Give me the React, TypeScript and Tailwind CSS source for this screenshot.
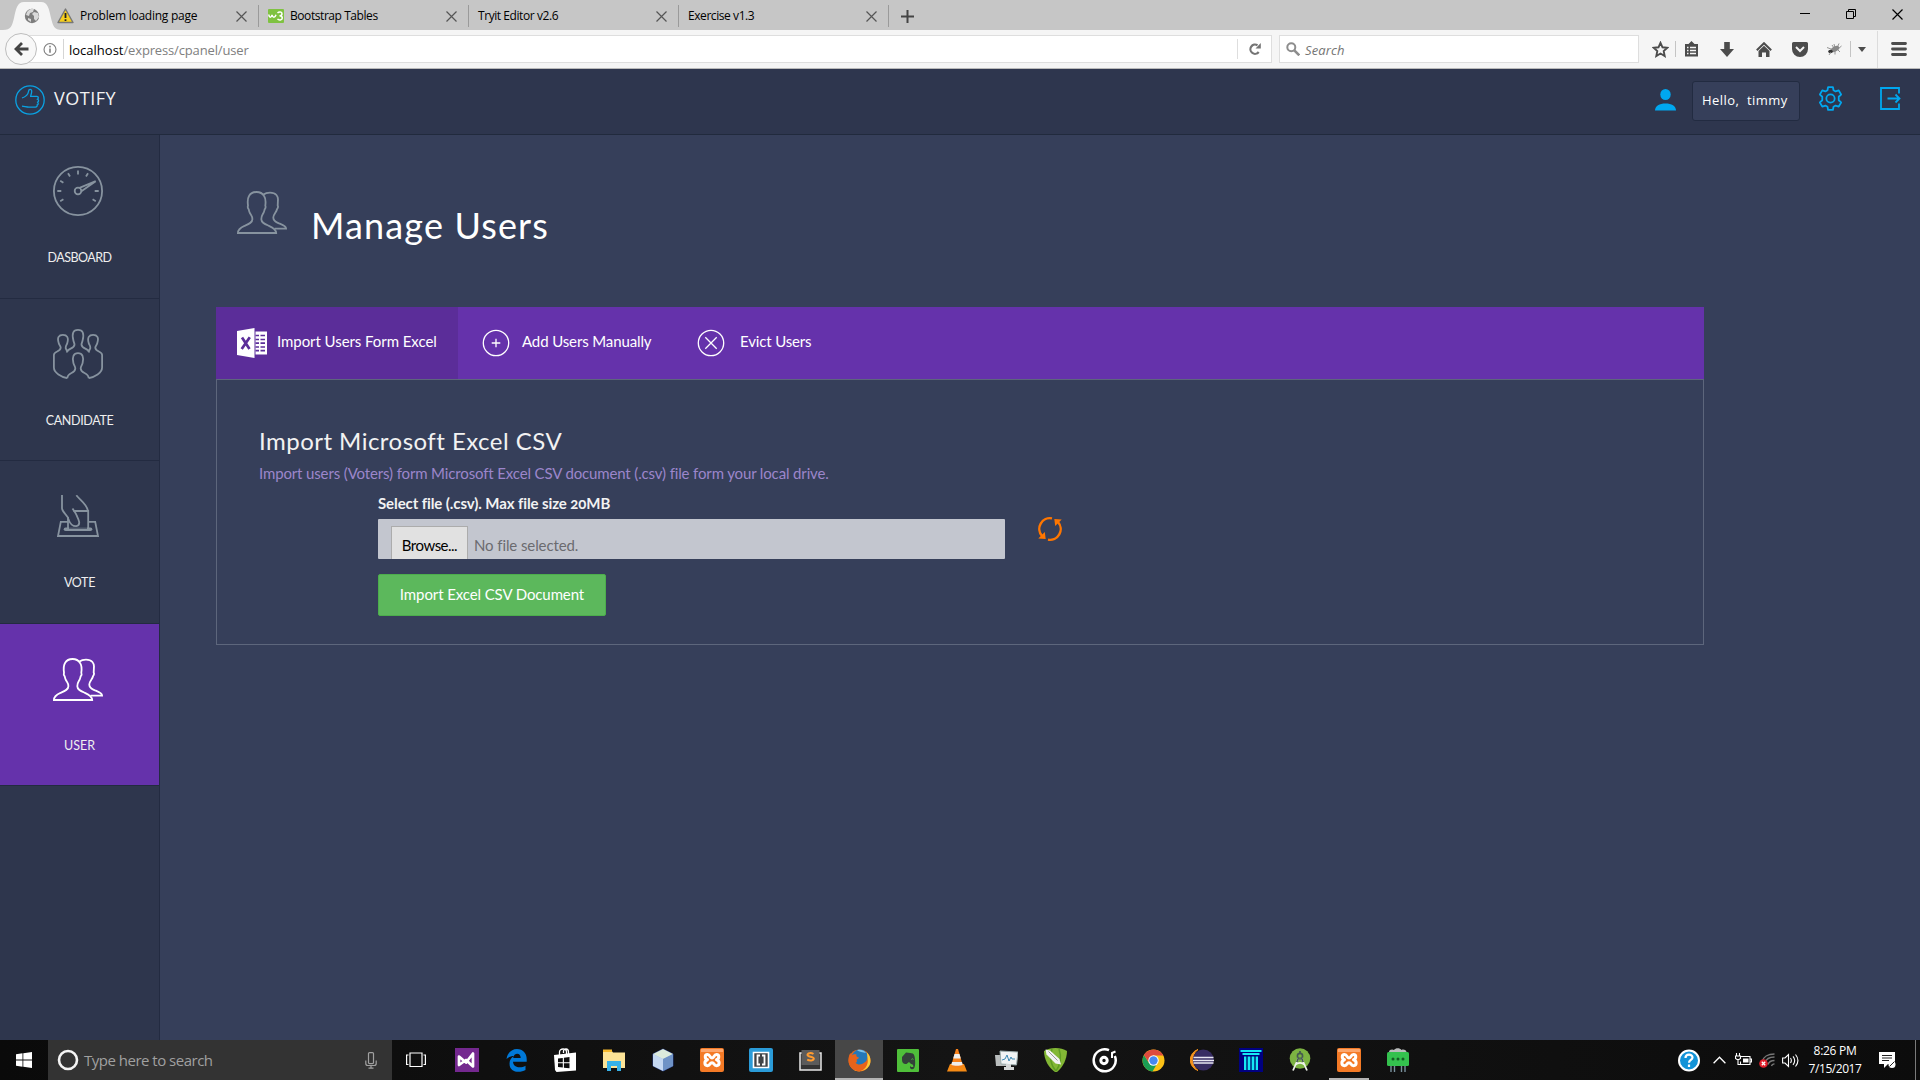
import React from "react";

const UI = "font-['Open_Sans','Noto_Sans',sans-serif]";
const BODY = "font-['Lato','Open_Sans',sans-serif]";

function Cross({ className = "size-[11px]" }: { className?: string }) {
  return (
    <svg className={className} viewBox="0 0 11 11" fill="none" stroke="currentColor" strokeWidth="1.2">
      <path d="M.5 .5 10.5 10.5M10.5 .5 .5 10.5" />
    </svg>
  );
}

function UsersIcon({ className }: { className: string }) {
  return (
    <svg className={className} width="50" height="43" viewBox="0 0 50 43" fill="none" stroke="currentColor" strokeWidth="1.8">
      <path d="M.9 42C.9 38.500 3.500 36.500 7.500 34.800c4.200-1.700 7.900-3 7.900-6.500 0-3.500-1-3.500-2.400-6-1-1.700-1-2.800-1.300-4-1.200-1.200-1.100-2.500-.7-3.700-.5-3.700-.5-7.100 1-9.600C13.500 2.300 16.500 1 19.600 1s5.800 1.200 7.500 4c1.700 2.500 1.700 6 1.200 9.600.5 1.200.500 2.500-.6 3.700-.4 1.200-.4 2.300-1.400 4-1.500 2.500-2 2.500-2 6 0 3.500 3.600 4.800 7.600 6.500 4 1.700 7.200 3.700 7.300 7.200z" />
      <path d="M26.500 3.500C28.500 2 31 1.700 33 1.700c6 0 8.500 3.400 7.900 8.300l-.2 4.500c.5 1 .3 2.500-.6 3.500-.7 3.500-3.800 5-3.800 8.500 0 4 2.700 4.500 5.700 5.900 3.500 1.500 7 2.200 7.100 5.300H37.500" />
    </svg>
  );
}

function GaugeIcon() {
  return (
    <svg width="50" height="50" viewBox="0 0 50 50" fill="none" stroke="currentColor" strokeWidth="1.8">
      <circle cx="25" cy="25" r="24.100" />
      <circle cx="25" cy="25" r="3.300" />
      <path d="M26.500 21.800 42.700 15.200 28.400 25.300" />
      <path d="M25 4.500v4M15 7.200l2 3.200M35 7.200l-2 3.200M7.200 14.800l3.200 1.900M4.300 25h4M7.200 35.200l3.200-1.900M45.700 25h-4M42.800 35.200l-3.200-1.900" />
    </svg>
  );
}

function GroupIcon() {
  return (
    <svg width="50" height="50" viewBox="0 0 50 50" fill="none" stroke="currentColor" strokeWidth="1.800">
      <path d="M14.300 49.200C8.500 47.800 .9 44 .9 38.500V26c0-4 6.800-3 6.800-7.500 0-1.500-1.600-2.500-2-4.500-1.800-5.500.1-8.200 4.200-8.200s6 2.700 4.400 8.200c-.4 2-2.100 3-1.500 5.500.3 1.200 1.200 2.200 2.400 3" />
      <path d="M13.800 23.500c.5-4.500 7.700-3.200 7.700-8 0-1.200-.8-2.200-1.200-4.500C18.800 4.500 20 .9 25 .9s6.200 3.600 4.700 10.100c-.4 2.300-1.200 3.300-1.200 4.500 0 4.800 7.200 3.500 7.700 8" />
      <path d="M35.700 49.200C41.500 47.800 49.100 44 49.100 38.500V26c0-4-6.800-3-6.800-7.500 0-1.500 1.600-2.500 2-4.500 1.800-5.500-.1-8.200-4.200-8.200s-6 2.700-4.400 8.200c.4 2 2.100 3 1.500 5.500-.3 1.200-1.200 2.200-2.400 3" />
      <path d="M14.300 49.200c0-6.200 8-4.200 8-9.700 0-2-1.300-3-1.900-5.500-1.500-6 .1-9.800 4.600-9.800s6.100 3.800 4.600 9.800c-.6 2.500-1.900 3.500-1.900 5.500 0 5.500 8 3.500 8 9.700" />
    </svg>
  );
}

function VoteIcon() {
  return (
    <svg width="42" height="42" viewBox="0 0 42 42" fill="none" stroke="currentColor" strokeWidth="1.800">
      <path d="M5 0v13c0 5 6 6.500 6.700 12 1.300 3.500 4.300 6.500 7.600 6.200 5.200-.9 2.200-7 .4-10.700-1.200-3-2.700-4.700-4.200-7" />
      <path d="M19.300.3C23 5 30.500 9.500 30.800 16M16.500 16h14.700v18.500H11V22" />
      <path d="M11 26.800H3.800L1 41h40l-2.800-14.200h-7" />
      <path d="M8.500 34.300h25" strokeWidth="3.600" strokeLinecap="round" />
      <path d="M12 33h18" stroke="#2e364d" strokeWidth="1.200" />
    </svg>
  );
}

function Tab({ label, icon }: { label: string; icon?: React.ReactNode }) {
  return (
    <div className="flex h-full w-[210px] items-center pt-[2px]">
      {icon}
      <span className="tracking-[-0.43px] text-black">{label}</span>
      <span className="mr-[11px] ml-auto text-[#555]"><Cross /></span>
      <i className="h-[22px] w-px bg-[#9a9a9a]" />
    </div>
  );
}

function BrowserChrome() {
  return (
    <header className={`${UI} h-[69px] w-full border-b border-[#b9b9b9] bg-[#f5f5f5] text-[12px] leading-[16px]`}>
      <div className="flex h-[30px] bg-[#c6c6c6]">
        <div className="relative h-[30px] w-[57px]">
          <svg width="62" height="30" viewBox="0 0 62 30">
            <path d="M3 30c8 0 9-4 11-12 2-9 3-16 10-16h17c7 0 8 7 10 16 2 8 3 12 11 12z" fill="#f5f5f5" />
            <circle cx="32" cy="16" r="7.200" fill="#7d7d7d" />
            <path d="M27 12c2-3 5-4 7-3l-1 3-3 1-1 3-3-1zM34 12l4 1 1 4-3 4-2-2v-3l-2-2zM28 18l3 1v3l-3-2z" fill="#d9d9d9" />
          </svg>
        </div>
        <div className="flex h-full w-[202px] items-center pt-[2px]">
          <svg className="mr-[6px]" width="17" height="16" viewBox="0 0 17 16">
            <path d="M8.500 1 16 14.500H1z" fill="#f7cf1d" stroke="#777" strokeWidth="1.400" strokeLinejoin="round" />
            <path d="M8.500 5v5M8.500 11.300v1.800" stroke="#222" strokeWidth="1.800" />
          </svg>
          <span className="tracking-[-0.25px] text-black">Problem loading page</span>
          <span className="mr-[11px] ml-auto text-[#555]"><Cross /></span>
          <i className="h-[22px] w-px bg-[#9a9a9a]" />
        </div>
        <Tab
          label="Bootstrap Tables"
          icon={
            <svg className="mr-[6px] ml-[9px]" width="16" height="14" viewBox="0 0 16 14">
              <rect width="16" height="14" rx="1" fill="#7fc241" />
              <path d="M.8 5.500c.5 3.500 2.500 3.500 3.200.3.700 3.200 3 3.200 4 0M9.500 4c1.500-1.500 4.500-1.300 4.500.8 0 1.700-1.500 2-2.500 2 1.500 0 2.800.5 2.800 2.300 0 2-3.500 2.500-4.800.800" fill="none" stroke="#fff" strokeWidth="1.500" />
            </svg>
          }
        />
        <Tab label="Tryit Editor v2.6" icon={<i className="w-[9px]" />} />
        <Tab label="Exercise v1.3" icon={<i className="w-[9px]" />} />
        <div className="flex w-[36px] items-center justify-center pt-[2px] text-[#444]">
          <svg width="13" height="13" viewBox="0 0 13 13" stroke="currentColor" strokeWidth="2"><path d="M6.500 0v13M0 6.500h13" /></svg>
        </div>
        <div className="mr-[17px] ml-auto flex items-center gap-[36px] pb-[2px] text-black">
          <svg width="10" height="10" viewBox="0 0 10 10" stroke="currentColor"><path d="M0 4.500h10" /></svg>
          <svg width="10" height="10" viewBox="0 0 10 10" fill="none" stroke="currentColor"><path d="M.5 2.500h7v7h-7zM2.500 2.500v-2h7v7h-2" /></svg>
          <Cross className="size-[11px]" />
        </div>
      </div>
      <div className="flex h-[38px] items-center">
        <div className="flex h-[28px] w-[1272px] shrink-0 items-center">
          <div className="relative z-10 ml-[5px] flex size-[32px] shrink-0 items-center justify-center rounded-full border border-[#bdbdbd] bg-[#f8f8f8] text-[#444]">
            <svg width="15" height="14" viewBox="0 0 15 14" fill="none" stroke="currentColor" strokeWidth="2.800"><path d="M8 1 2 7l6 6M2.500 7H14.500" /></svg>
          </div>
          <div className="-ml-[13px] flex h-[28px] flex-1 items-center border border-[#dedede] bg-white pl-[18px]">
            <svg width="14" height="15" viewBox="0 0 15 15" fill="none" stroke="#808080" strokeWidth="1.200">
              <circle cx="7.500" cy="7.500" r="6.400" /><path d="M7.500 6.500V11M7.500 3.600v1.800" strokeWidth="1.700" />
            </svg>
            <i className="ml-[6px] h-[20px] w-px bg-[#d5d5d5]" />
            <span className="ml-[5px] pt-[2px] text-[13px] text-black">localhost</span>
            <span className="pt-[2px] text-[13px] tracking-[-0.15px] text-[#808080]">/express/cpanel/user</span>
            <div className="ml-auto flex h-[20px] w-[34px] items-center justify-center border-l border-[#dedede]">
              <svg width="12" height="12" viewBox="0 0 12 12" fill="none" stroke="#757575" strokeWidth="2.200">
                <path d="M9.700 9A4.600 4.600 0 1 1 8.500 2.300" /><path d="M6.500 5.500h5.300V0z" fill="#757575" stroke="none" />
              </svg>
            </div>
          </div>
        </div>
        <div className="ml-[7px] flex h-[28px] w-[360px] shrink-0 items-center border border-[#dedede] bg-white pl-[6px]">
          <svg width="14" height="14" viewBox="0 0 14 14" fill="none" stroke="#8d8d8d" strokeWidth="2"><circle cx="5.300" cy="5.300" r="4" /><path d="m8.300 8.300 5 5" strokeWidth="2.600" /></svg>
          <span className="ml-[5px] pt-[2px] text-[13px] tracking-[0.1px] text-[#757575] italic">Search</span>
        </div>
        <div className="ml-[6px] flex h-full items-center text-[#4c4c4c]">
          <div className="flex w-[30px] justify-center">
            <svg width="17" height="17" viewBox="0 0 17 17" fill="none" stroke="currentColor" strokeWidth="1.900"><path d="m8.500 1.800 2 4.500 4.800.5-3.600 3.300 1 4.900-4.200-2.500L4.300 15l1-4.900L1.700 6.800l4.800-.5z" /></svg>
          </div>
          <i className="h-[16px] w-px bg-[#c4c4c4]" />
          <div className="flex w-[31px] justify-center">
            <svg width="15" height="16" viewBox="0 0 15 16"><path d="M1 3h3.500L7.500 0l3 3H14v12.500H1z" fill="currentColor" /><path d="M3 6.500h1.500M6 6.500h6M3 9.500h1.500M6 9.500h6M3 12.500h1.500M6 12.500h6" stroke="#f5f5f5" strokeWidth="1.500" /></svg>
          </div>
          <div className="flex w-[39px] justify-center">
            <svg width="14" height="15" viewBox="0 0 14 15" fill="currentColor"><path d="M4.200 0h5.600v7H14l-7 8-7-8h4.200z" /></svg>
          </div>
          <div className="flex w-[36px] justify-center">
            <svg width="16" height="15" viewBox="0 0 16 15"><path d="m.8 8.200 7.200-7 7.200 7" fill="none" stroke="currentColor" strokeWidth="2" /><path d="m2.500 9 5.500-5.300L13.500 9v6H10v-4.500H6V15H2.500z" fill="currentColor" /></svg>
          </div>
          <div className="flex w-[36px] justify-center">
            <svg width="16" height="15" viewBox="0 0 16 15"><path d="M1.500 0h13A1.500 1.500 0 0 1 16 1.500V7A8 8 0 0 1 0 7V1.500A1.500 1.500 0 0 1 1.500 0z" fill="currentColor" /><path d="m4 5 4 4 4-4" fill="none" stroke="#f5f5f5" strokeWidth="2" /></svg>
          </div>
          <div className="flex w-[32px] justify-center">
            <svg width="16" height="13" viewBox="0 0 16 13"><ellipse cx="9" cy="6" rx="4.500" ry="2.600" transform="rotate(-25 9 6)" fill="#888" /><ellipse cx="4.500" cy="8.500" rx="2.300" ry="1.800" fill="#333" /><path d="M1 4.500 5 6M3 12l2-3M9 11.500V7M8 1l1 4M13 .5 11 5M15.500 3 12 6M14 9l-3-3M6 2l2 3" stroke="#888" strokeWidth=".9" /></svg>
          </div>
          <i className="h-[16px] w-px bg-[#c4c4c4]" />
          <div className="flex w-[26px] justify-center pr-[5px]">
            <svg width="8" height="5" viewBox="0 0 8 5" fill="currentColor"><path d="M0 0h8L4 5z" /></svg>
          </div>
          <i className="h-[37px] w-px bg-[#dcdcdc]" />
          <div className="flex w-[42px] justify-center">
            <svg width="16" height="14" viewBox="0 0 16 14" stroke="currentColor" strokeWidth="2.800" strokeLinecap="round"><path d="M1.500 1.500h13M1.500 7h13M1.500 12.500h13" /></svg>
          </div>
        </div>
      </div>
    </header>
  );
}

function AppHeader() {
  return (
    <div className="flex h-[66px] items-start border-b border-[#212a3d] bg-[#2e364e]">
      <svg className="mt-[16px] ml-[15px]" width="30" height="30" viewBox="0 0 30 30" fill="none" stroke="#0aa2e3" strokeWidth="1.300">
        <circle cx="15" cy="15" r="14.200" />
        <path d="M7 13c3-1 6-3 6.500-6.500.1-2.500 3-3 3.200-.500.1 2-.7 3.500-1 5.300h6.200c1.800.2 1.700 2.400.7 2.900 1.400.7 1.200 2.500.1 3 .9 1 .5 2.300-.5 2.700.3 1.200-.5 2.200-1.700 2.300H14c-2.500 0-4.500-.8-7-1" />
      </svg>
      <span className={`${UI} mt-[17px] ml-[9px] text-[18px] leading-[24px] tracking-[0.5px] text-[#f2f2f2]`}>VOTIFY</span>
      <svg className="mt-[20px] ml-auto" width="21" height="22" viewBox="0 0 21 22" fill="#00a8f0"><ellipse cx="10.500" cy="5.500" rx="5.200" ry="5.500" /><path d="M0 21.500c0-4.500 4.500-7 10.500-7S21 17 21 21.500z" /></svg>
      <div className={`${UI} mt-[12px] ml-[16px] flex h-[40px] w-[108px] items-center rounded-[3px] border border-[#222b41] bg-[#363f5a] pb-[2px] pl-[9px] text-[13px] leading-[18px] whitespace-pre text-white`}>
        <span className="tracking-[0.45px]">Hello,  timmy</span>
      </div>
      <svg className="mt-[17px] ml-[18px]" width="25" height="25" viewBox="0 0 24 24" fill="none" stroke="#00a8f0" strokeWidth="1.700">
        <circle cx="12" cy="12" r="4" />
        <path d="M9.700 1h4.600l.6 3.100 2 1.100 3-1 2.300 4-2.300 2.100v3.400l2.300 2.100-2.300 4-3-1-2 1.100-.6 3.100H9.700l-.6-3.100-2-1.100-3 1-2.300-4 2.300-2.100v-3.400L1.800 8.200l2.300-4 3 1 2-1.100z" strokeLinejoin="round" />
      </svg>
      <svg className="mt-[18px] mr-[19px] ml-[37px]" width="21" height="23" viewBox="0 0 21 23" fill="none" stroke="#00a8f0" strokeWidth="1.800"><path d="M19 6.500V1H1v21h18v-5.500M7.500 11.500h12M15.500 7.500l4 4-4 4" /></svg>
    </div>
  );
}

const navItems = [
  { label: "DASBOARD", size: "h-[164px]", box: "h-[114px] pt-[31px]", tracking: "tracking-[-0.5px]", icon: <GaugeIcon />, active: false },
  { label: "CANDIDATE", size: "h-[162px]", box: "h-[113px] pt-[30px]", tracking: "tracking-[-0.35px]", icon: <GroupIcon />, active: false },
  { label: "VOTE", size: "h-[163px]", box: "h-[113px] pt-[34px]", tracking: "tracking-[-0.3px]", icon: <VoteIcon />, active: false },
  { label: "USER", size: "h-[162px]", box: "h-[113px] pt-[34px]", tracking: "tracking-normal", icon: <UsersIcon className="text-white" />, active: true },
];

function Sidebar() {
  return (
    <nav className="w-[160px] shrink-0 border-r border-[#232b41] bg-[#2e364d]">
      {navItems.map((n) => (
        <div key={n.label} className={`${n.size} flex flex-col border-b border-[#232b41] ${n.active ? "bg-[#6532ab]" : ""}`}>
          <div className={`${n.box} flex shrink-0 justify-center pr-[3px] text-[#87939f]`}>{n.icon}</div>
          <div className={`${BODY} ${n.tracking} text-center text-[12.500px] leading-[18px] text-[#efefef]`}>{n.label}</div>
        </div>
      ))}
    </nav>
  );
}

function ImportPanel() {
  return (
    <section className={`${BODY} mt-[72px] ml-[56px] w-[1488px] text-[15px] leading-[20px] text-white`}>
      <div className="flex h-[72px] bg-[#6532ab]">
        <div className="flex w-[242px] items-center bg-[#5b2d99] pl-[21px]">
          <svg width="30" height="30" viewBox="0 0 30 30">
            <path d="M0 3 17.500 0v30L0 27z" fill="#fff" /><path d="M18.500 3.500H30v23H18.500z" fill="#fff" />
            <path d="M18.500 7.500h3.500m1.500 0H28M18.500 11.500h3.500m1.500 0H28M18.500 15.200h3.500m1.500 0H28M18.500 19h3.500m1.500 0H28M18.500 22.700h3.500m1.500 0H28" stroke="#5b2d99" strokeWidth="1.700" />
            <path d="m5 9.500 7.500 11.500M12.800 9.200 4.700 21" stroke="#5b2d99" strokeWidth="2.700" />
          </svg>
          <span className="ml-[10px] pb-[4px] tracking-[-0.06px]">Import Users Form Excel</span>
        </div>
        <div className="flex w-[214px] items-center pl-[24px]">
          <svg width="28" height="28" viewBox="0 0 28 28" fill="none" stroke="#fff" strokeWidth="1.300"><circle cx="14" cy="14" r="12.700" /><path d="M14 9.700v8.600M9.700 14h8.600" /></svg>
          <span className="ml-[12px] pb-[4px] tracking-[-0.12px]">Add Users Manually</span>
        </div>
        <div className="flex items-center pl-[25px]">
          <svg width="28" height="28" viewBox="0 0 28 28" fill="none" stroke="#fff" strokeWidth="1.300"><circle cx="14" cy="14" r="12.700" /><path d="m8.300 8.300 11.400 11.400M19.700 8.300 8.300 19.700" /></svg>
          <span className="ml-[15px] pb-[4px] tracking-[-0.15px]">Evict Users</span>
        </div>
      </div>
      <div className="flex h-[266px] flex-col items-start border border-[#5d667c] pl-[42px]">
        <h2 className="mt-[45px] text-[24px] leading-[32px] tracking-[0.47px] text-[#f2f2f2]">Import Microsoft Excel CSV</h2>
        <p className="mt-[6px] tracking-[-0.14px] text-[#9c86cb]">Import users (Voters) form Microsoft Excel CSV document (.csv) file form your local drive.</p>
        <div className="ml-[119px] flex flex-col items-start">
          <label className="mt-[10px] font-bold tracking-[-0.1px] text-[#f2f2f2] oldstyle-nums">Select file (.csv). Max file size 20MB</label>
          <div className="mt-[6px] flex">
            <div className="flex h-[40px] w-[627px] items-end rounded-[1px] bg-[#c3c6cf]">
              <div className="ml-[13px] flex h-[33px] w-[77px] items-end justify-center border border-b-0 border-[#acacac] bg-[#e1e1e1] pb-[4px] tracking-[-0.5px] text-black">Browse...</div>
              <span className="ml-[6px] pb-[4px] tracking-[-0.1px] text-[#6b6b6f]">No file selected.</span>
            </div>
            <svg className="-mt-[2px] ml-[33px]" width="24" height="24" viewBox="0 0 24 24" fill="none" stroke="#ff7600" strokeWidth="2.400">
              <path d="M14 1.400A10.700 10.700 0 0 0 4 19M10 22.600A10.700 10.700 0 0 0 20 5" />
              <path d="M.300 21.500 6.800 15l.9 7zM23.700 2.500 17.200 9l-.9-7z" fill="#ff7600" stroke="none" />
            </svg>
          </div>
          <div className="mt-[15px] flex h-[42px] w-[228px] items-center justify-center rounded-[2px] border border-[#4cae4c] bg-[#5cb85c] pb-[2px] tracking-[-0.1px]">Import Excel CSV Document</div>
        </div>
      </div>
    </section>
  );
}

function Xampp() {
  return (
    <svg width="24" height="24" viewBox="0 0 24 24"><rect width="24" height="24" rx="2" fill="#f47a26" /><path d="M1 1h22v3H1z" fill="#fda66c" /><path d="M7.500 6.500c-3 0-3 4 0 5.200-3.500 1-3.500 6 0 6 3 0 2-3 4.500-3s1.500 3 4.500 3c3.500 0 3.500-5 0-6 3-1.200 3-5.200 0-5.200S14.500 10 12 10 10.500 6.500 7.500 6.500z" fill="none" stroke="#fff" strokeWidth="3" strokeLinejoin="round" /></svg>
  );
}

const apps: { name: string; icon: React.ReactNode }[] = [
  { name: "studio", icon: <svg width="24" height="24" viewBox="0 0 24 24"><path d="M0 0h24v24H0z" fill="#74288f" /><path d="m4 8.500 7 6L18 5.500v13l-7-6.500-7 5z" fill="none" stroke="#fff" strokeWidth="2.700" strokeLinejoin="round" /></svg> },
  { name: "edge", icon: <svg width="21" height="23" viewBox="0 0 21 23"><path d="M.5 10C1.500 3.500 6 0 11 0c6 0 9.700 4.500 9.700 10v2.800H7c.3 6.200 8 6.700 12.500 3.900V21c-5 3-16 3.300-16-6.500 0-3.500 2-6 4.500-7.500-3 0-5.500.8-7.500 3zM7.200 9h7.500c0-6-7-5.500-7.500 0z" fill="#0078d7" /></svg> },
  { name: "store", icon: <svg width="22" height="25" viewBox="0 0 22 25"><path d="M5.500 7V4c0-4 7-4 7 0v2M9.500 5V3c0-3 5-3 5 1v2" fill="none" stroke="#fff" strokeWidth="1.300" /><path d="m0 7 22-2.500v18L2.500 24 1 22z" fill="#fff" /><path d="m4 10.500 4.800-.6v4.300H4zM9.900 9.800l5.600-.7v5.100H9.900zM4 15.300h4.800v4.300L4 19.100zM9.900 15.300h5.600v5l-5.600-.6z" fill="#0c0c0c" /></svg> },
  { name: "explorer", icon: <svg width="22" height="22" viewBox="0 0 22 22"><path d="M0 1h8l2 2.500h12V19H0z" fill="#fce396" /><path d="M0 .5h9v2.500H0z" fill="#f5b92e" /><path d="M4 12h14v10h-4v-5H8v5H4z" fill="#37b2e8" /></svg> },
  { name: "cube", icon: <svg width="22" height="24" viewBox="0 0 22 24"><path d="m11 1 10 5v12l-10 5-10-5V6z" fill="#9cb9dc" stroke="#263a80" /><path d="m11 1 10 5-10 5L1 6z" fill="#dcebdc" /><path d="m11 11 10-5v12l-10 5z" fill="#6f93c6" /><path d="M1 6l10 5v12L1 18z" fill="#c4d8f2" /></svg> },
  { name: "xampp", icon: <Xampp /> },
  { name: "brackets", icon: <svg width="24" height="24" viewBox="0 0 24 24"><rect width="24" height="24" rx="2" fill="#2a9bd8" /><path d="M4.500 4.500h15v15h-15z" fill="#3f4347" stroke="#fff" strokeWidth="1.600" /><path d="M11 7.500H8.500v9H11M13 7.500h2.500v9H13" fill="none" stroke="#fff" strokeWidth="1.800" /></svg> },
  { name: "sublime", icon: <svg width="23" height="22" viewBox="0 0 23 22"><path d="M1 4h21v17H1z" fill="#333" stroke="#e8e8e8" strokeWidth="1.500" /><path d="M2.500 1h18v15h-18z" fill="#5b5b5b" /><path d="M14.500 5c-2.500-1.500-6-1-6 1s6.300 1.400 6.300 3.600c0 2.200-4 2.500-6.600 1" fill="none" stroke="#ff9b2f" strokeWidth="2" /></svg> },
  {
    name: "firefox",
    icon: (
      <svg width="23" height="23" viewBox="0 0 23 23">
        <circle cx="11.500" cy="11.500" r="11" fill="#e66a1c" />
        <circle cx="12" cy="9" r="8.500" fill="#2378b8" />
        <path d="M9 1.200C12 0 16 1 18 4c-3-1-7-1-9-2.800z" fill="#7cc4ea" />
        <path d="M18.500 3C23 7 23.500 13 21 17c-3 5-10 6.500-15 4 6 0 12-4 13-9 .6-3.500.5-6-.5-9z" fill="#fbc937" />
        <path d="M.5 11C.5 7.500 1.500 5 2.500 4l1 2.500C5 5 7 5 8.500 5.500 8 7 8.500 8 11 8.500c0 1-2 1.500-2.500 2.500 1 1.500 0 2.500-1 2.500 2 3 7 2.500 9.500-.5 2-.5 2-3 2-5 2 5 0 11-5 13.500C8 24 .5 19 .5 11z" fill="#e8631a" />
      </svg>
    ),
  },
  { name: "evernote", icon: <svg width="22" height="23" viewBox="0 0 22 23"><rect width="22" height="23" rx="1" fill="#4fbf3a" /><path d="M9 3.500 5 8v3c0 3 2 4.500 4.500 4L12 13l2 2c2 .4 2.500 1 2.300 3h-2.500v-1.200c-1.500 1.200-.8 3.500 1.500 3.500 3.200 0 3.200-6 2.500-11.500-.5-4-2-4.500-4.500-4.800z" fill="#33403a" /><path d="M14.500 10.500c.3-1 1.500-1 1.800 0" stroke="#4fbf3a" fill="none" /></svg> },
  { name: "vlc", icon: <svg width="20" height="23" viewBox="0 0 20 23"><path d="m3 15-3 7.500h20L17 15z" fill="#f58a14" /><path d="M9 0h2l5 17c-2 2-10 2-12 0z" fill="#f7811b" /><path d="M7.500 5h5l1.300 4.500H6.200zM5 13h10l.7 3c-3 1-8.500 1-11.400 0z" fill="#eee" /></svg> },
  { name: "monitor", icon: <svg width="23" height="21" viewBox="0 0 23 21"><path d="M0 5h12v11H1z" fill="#b9bdbd" /><path d="m5 1 18 1-1.500 13L6 14z" fill="#f1f4f5" stroke="#9aa" /><path d="m7 10 3-1 2-4 2 6 2-4 1 2h3" fill="none" stroke="#3c88b4" /><path d="M11 14h5v3h3v3H9v-3h2z" fill="#d5d8d8" /></svg> },
  { name: "corel", icon: <svg width="23" height="24" viewBox="0 0 23 24"><path d="M0 3C6-1 17-1 23 3c0 8-4 16-10 21h-2C5 20 0 12 0 3z" fill="#83b735" /><path d="M8 1c-3 8-1 17 4 22M15 1c3 8 1 17-3 22" stroke="#5f9c25" fill="none" strokeWidth="1.500" /><path d="M1.500 1.500 6 2.500l9.500 8.500 1.500 5.500-5.500-1L2.500 6.500z" fill="#f2f2f2" /><path d="m4.500 3.500 9 9" stroke="#9a9a9a" /></svg> },
  { name: "groove", icon: <svg width="25" height="25" viewBox="0 0 25 25" fill="none" stroke="#fff"><path d="M17 2.200A11 11 0 1 0 22.800 8" strokeWidth="2.500" /><circle cx="12" cy="12.500" r="3.200" strokeWidth="3" /><path d="M20 10V5l3.500-1.500" strokeWidth="2" /></svg> },
  { name: "chrome", icon: <svg width="23" height="23" viewBox="0 0 23 23"><circle cx="11.500" cy="11.500" r="11" fill="#fbc116" /><path d="M2 6a11 11 0 0 0 8.500 16.500l5-8.500H7z" fill="#1a9e54" /><path d="M2 6C5 0 17-2 21.300 6.500H11.500l-5 6.500z" fill="#dd4b3e" /><circle cx="11.500" cy="11.500" r="5.200" fill="#fff" /><circle cx="11.500" cy="11.500" r="4.200" fill="#4688f1" /></svg> },
  { name: "eclipse", icon: <svg width="24" height="22" viewBox="0 0 24 22"><path d="M8 .5a11 11 0 0 0 0 21A13 13 0 0 1 8 .5z" fill="#f7941e" stroke="#f7941e" /><circle cx="13.300" cy="11" r="10.500" fill="#372c63" /><path d="M3.500 8.500h20M3 11.500h21M3.500 14h20" stroke="#e8e6f2" strokeWidth="1.400" /></svg> },
  { name: "pillar", icon: <svg width="24" height="24" viewBox="0 0 24 24"><path d="M0 0h24v24H0z" fill="#000080" /><path d="M1.500 2h21v2h-21zM3.500 5h17v2h-17zM5 8.500h2V22H5zM9 8.500h2V22H9zM13 8.500h2V22h-2zM17 8.500h2V22h-2z" fill="#15e8f4" /><path d="M7.500 8.500h1V22h-1zM11.500 8.500h1V22h-1zM15.500 8.500h1V22h-1z" fill="#00a3b5" /></svg> },
  { name: "android", icon: <svg width="22" height="24" viewBox="0 0 22 24"><circle cx="11" cy="10.500" r="10.300" fill="#7cb342" /><circle cx="11" cy="8" r="2.600" fill="none" stroke="#455a50" strokeWidth="1.600" /><path d="M9.500 10 4 22.500M12.500 10 18 22.500M6 17c3-2.500 7-2.500 10 0" stroke="#eef2ea" strokeWidth="1.800" fill="none" /><path d="M11 3v3M9.500 10 7.800 14M12.500 10l1.700 4" stroke="#455a50" strokeWidth="1.800" /></svg> },
  { name: "xampp-panel", icon: <Xampp /> },
  { name: "robot", icon: <svg width="22" height="24" viewBox="0 0 22 24"><path d="M2 4c0-3 4-3 5-2 1.500-2.500 6-2.500 7.500 0 2-1 5 0 5 2z" fill="#b9bcbc" /><rect y="4" width="22" height="14" rx="1.500" fill="#34c14e" /><circle cx="6" cy="11" r="1.500" fill="#145c24" /><circle cx="11" cy="11" r="1.500" fill="#145c24" /><circle cx="16" cy="11" r="1.500" fill="#145c24" /><path d="M4 18v6M7.500 18v6M14.500 18v6M18 18v6" stroke="#78909c" strokeWidth="1.400" /></svg> },
];

const cellTone: Record<string, string> = {
  firefox: "bg-[#474747] border-b-2 border-[#b4b4b4] pt-[2px]",
};

function Taskbar() {
  return (
    <footer className={`${UI} flex h-[40px] bg-linear-to-r from-[#0a0a0a] via-[#141414] to-[#0c0c0c]`}>
      <div className="flex w-[48px] items-center justify-center">
        <svg width="16" height="16" viewBox="0 0 16 16" fill="#fff"><path d="M0 2.300 6.500 1.300v6.300H0zM7.300 1.200 16 0v7.600H7.300zM0 8.400h6.500v6.300L0 13.700zM7.300 8.400H16V16l-8.700-1.200z" /></svg>
      </div>
      <div className="flex w-[344px] items-center bg-[#333] pl-[9px]">
        <svg width="22" height="22" viewBox="0 0 22 22" fill="none" stroke="#f4f4f4" strokeWidth="2.600"><circle cx="11" cy="11" r="9" /></svg>
        <span className="ml-[5px] text-[15px] leading-[20px] tracking-[-0.5px] text-[#a0a0a0]">Type here to search</span>
        <svg className="mr-[15px] ml-auto" width="12" height="17" viewBox="0 0 12 17" fill="none" stroke="#a0a0a0" strokeWidth="1.200"><rect x="3.500" y=".6" width="5" height="11" rx="1" /><path d="M.8 8.500v3q0 2 2 2h6.400q2 0 2-2v-3M6 13.500V16M3.500 16.200h5" /></svg>
      </div>
      <div className="flex w-[51px] items-center justify-center pr-[3px]">
        <svg width="20" height="16" viewBox="0 0 20 16" fill="none" stroke="#fff" strokeWidth="1.200"><path d="M4 1h12v13.500H4zM2.500 3H.6v9.500h1.900M17.500 3h1.900v9.500h-1.900" /></svg>
      </div>
      {apps.map((a) => (
        <div key={a.name} className="flex w-[49px]">
          <div className={`flex h-full w-[48px] items-center justify-center ${cellTone[a.name] ?? ""}`}>
            {a.name === "xampp-panel" ? (
              <div className="flex h-full w-[40px] items-center justify-center border-b-2 border-[#b4b4b4] pt-[2px]">{a.icon}</div>
            ) : (
              a.icon
            )}
          </div>
        </div>
      ))}
      <div className="ml-auto flex items-center text-white">
        <svg width="24" height="24" viewBox="0 0 24 24"><circle cx="12" cy="12.500" r="10" fill="#1293d8" stroke="#fff" strokeWidth="2" /><path d="M8.500 10c0-4.500 7-4.300 7-.5 0 2.500-3.500 2.500-3.500 5.300M12 16.500V19" fill="none" stroke="#fff" strokeWidth="2.200" /></svg>
        <svg className="ml-[12px]" width="13" height="8" viewBox="0 0 13 8" fill="none" stroke="#fff" strokeWidth="1.300"><path d="m.6 7.200 5.900-6 5.900 6" /></svg>
        <svg className="ml-[9px]" width="17" height="14" viewBox="0 0 17 14" fill="none" stroke="#fff" strokeWidth="1.100"><path d="M5.500 3.500h9.500v8H5.500v-3M15.500 6h1v3h-1M1.500 0v2.500M4.500 0v2.500M.5 3h5v2.500l-1.500 1H2L.5 5.500zM3 7v4.500h2.500" /><path d="M8 5.500h5.500v4H8z" fill="#fff" stroke="none" /></svg>
        <svg className="ml-[7px]" width="16" height="15" viewBox="0 0 16 15" fill="none" stroke="#777" strokeWidth="1.300"><path d="M3 9C4 4 9 1 15.500 1M6 10c1-4 5-6 9.500-6M9 11.500C10 8.500 12.500 7.500 15.500 7.500M12.500 13c.500-2 1.500-2.200 3-2.200" /><circle cx="4.500" cy="10.500" r="4.300" fill="#e0202c" stroke="none" /><path d="m2.800 8.800 3.400 3.400M6.200 8.800l-3.400 3.400" stroke="#fff" /></svg>
        <svg className="ml-[7px]" width="17" height="15" viewBox="0 0 17 15" fill="none" stroke="#fff" strokeWidth="1.100"><path d="M.6 5h2.400l3.500-3.500v12L3 10H.6zM8.500 5c1 1.500 1 3.500 0 5M11 3.300c2 2.500 2 6 0 8.500M13.500 1.500c3 3.700 3 8.300 0 12" /></svg>
        <div className="ml-[6px] flex w-[60px] flex-col items-center text-[12px] leading-[18px]">
          <span className="tracking-[-0.3px]">8:26 PM</span>
          <span className="tracking-[-0.45px]">7/15/2017</span>
        </div>
        <svg className="ml-[14px]" width="17" height="17" viewBox="0 0 17 17"><path d="M0 0h16v12H9l-4 4v-4H0z" fill="#fff" /><path d="M3 3.500h10M3 6h10M3 8.500h7" stroke="#222" /><circle cx="13" cy="12.500" r="3.500" fill="#fff" /><path d="m10.500 14.500 5-5" stroke="#222" /></svg>
        <i className="mr-[4px] ml-[19px] h-[40px] w-px bg-[#7a7a7a]" />
      </div>
    </footer>
  );
}

export default function App() {
  return (
    <div className="flex h-[1080px] w-[1920px] flex-col overflow-hidden bg-[#363f5a]">
      <BrowserChrome />
      <AppHeader />
      <div className="flex min-h-0 flex-1">
        <Sidebar />
        <main className="flex-1 bg-[#363f5a]">
          <div className="flex h-[100px] items-start pl-[77px]">
            <UsersIcon className="mt-[56px] text-[#87939f]" />
            <h1 className={`${BODY} mt-[66px] ml-[24px] text-[36px] leading-[48px] tracking-[1.15px] text-white`}>Manage Users</h1>
          </div>
          <ImportPanel />
        </main>
      </div>
      <Taskbar />
    </div>
  );
}
